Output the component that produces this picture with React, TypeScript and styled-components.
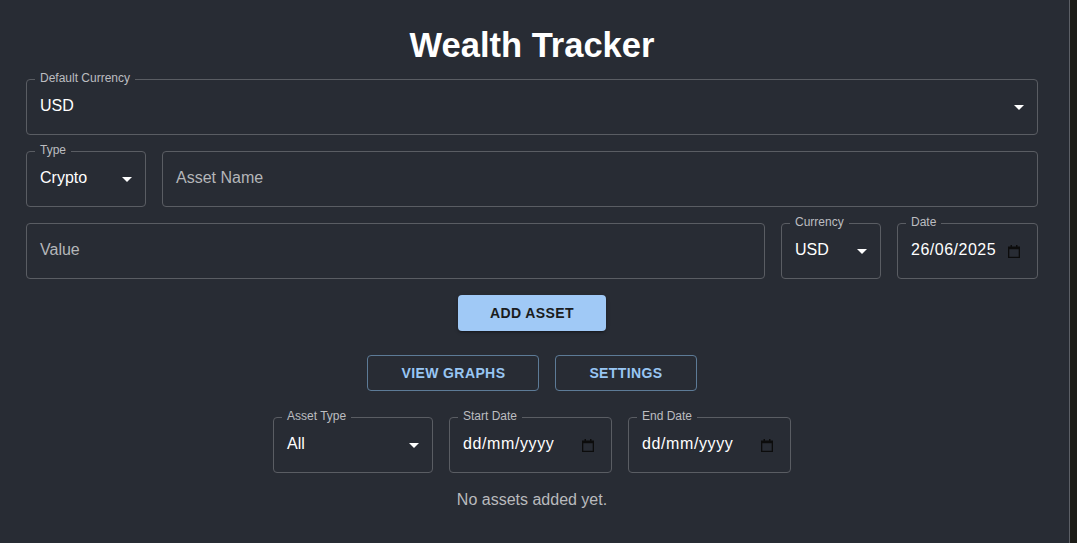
import React from "react";
import styled, { createGlobalStyle } from "styled-components";

const GlobalStyle = createGlobalStyle`
  html, body, #root {
    margin: 0;
    padding: 0;
    height: 100%;
  }
  body {
    background: #282c34;
    font-family: "Liberation Sans", Arial, sans-serif;
    color: #ffffff;
  }
`;

const Page = styled.div`
  display: flex;
  min-height: 100vh;
  background: #282c34;
`;

const Main = styled.main`
  flex: 1;
  min-width: 0;
  padding: 25px 31px 0 26px;
  display: flex;
  flex-direction: column;
`;

const ScrollStrip = styled.div`
  flex: none;
  width: 7px;
  border-left: 1px solid #5c5f66;
  background: #1c1c18;
`;

const Title = styled.h1`
  margin: 0 0 14px;
  text-align: center;
  font-size: 34.5px;
  line-height: 40px;
  font-weight: 700;
  color: #ffffff;
`;

const Form = styled.div`
  display: flex;
  flex-direction: column;
  gap: 16px;
`;

const Row = styled.div`
  display: flex;
  gap: 16px;
`;

const Field = styled.div<{ $width?: number; $padRight?: number }>`
  position: relative;
  box-sizing: border-box;
  height: 56px;
  display: flex;
  align-items: center;
  padding: 0 ${(p) => p.$padRight ?? 14}px 0 13px;
  border: 1px solid #5a5d63;
  border-radius: 4px;
  ${(p) => (p.$width ? `width: ${p.$width}px; flex: none;` : "flex: 1; min-width: 0;")}
`;

const Label = styled.span`
  position: absolute;
  top: -8px;
  left: 8px;
  padding: 0 5px;
  background: #282c34;
  font-size: 12px;
  line-height: 12px;
  color: #bcbdc0;
  white-space: nowrap;
`;

const Value = styled.span<{ $muted?: boolean; $spacing?: number }>`
  flex: 1;
  padding-bottom: 3px;
  font-size: 16px;
  color: ${(p) => (p.$muted ? "#b4b6b9" : "#ffffff")};
  letter-spacing: ${(p) => p.$spacing ?? 0}px;
  white-space: nowrap;
`;

const ArrowIcon = styled.svg`
  flex: none;
  width: 24px;
  height: 24px;
  margin-right: -8px;
  fill: #ffffff;
`;

const CalendarIcon = styled.svg`
  flex: none;
  width: 12px;
  height: 13px;
  fill: #0c0c0c;
`;

const ButtonRow = styled.div<{ $top: number }>`
  display: flex;
  justify-content: center;
  gap: 16px;
  margin-top: ${(p) => p.$top}px;
`;

const Button = styled.button<{ $variant: "contained" | "outlined" }>`
  box-sizing: border-box;
  height: 36px;
  padding: 0 ${(p) => (p.$variant === "contained" ? 32 : 33)}px;
  border-radius: 4px;
  font-family: "Liberation Sans", Arial, sans-serif;
  font-size: 14px;
  font-weight: 700;
  letter-spacing: 0.4px;
  text-transform: uppercase;
  cursor: pointer;
  ${(p) =>
    p.$variant === "contained"
      ? `
    background: #a0c9f6;
    color: #1a1c20;
    border: none;
    box-shadow: 0 3px 1px -2px rgba(0,0,0,0.2), 0 2px 2px 0 rgba(0,0,0,0.14), 0 1px 5px 0 rgba(0,0,0,0.12);
  `
      : `
    background: transparent;
    color: #98c6f3;
    border: 1px solid #5d7b97;
  `}
`;

const FilterRow = styled.div`
  display: flex;
  justify-content: center;
  gap: 16px;
  margin-top: 26px;
`;

const EmptyText = styled.p`
  margin: 18px 0 0;
  text-align: center;
  font-size: 16px;
  line-height: normal;
  color: #b9babd;
`;

const Arrow = () => (
  <ArrowIcon viewBox="0 0 24 24" aria-hidden="true">
    <path d="M7 10l5 5 5-5z" />
  </ArrowIcon>
);

const Calendar = () => (
  <CalendarIcon viewBox="0 0 12 13" aria-hidden="true">
    <rect x="2.5" y="0" width="1.5" height="2.5" />
    <rect x="8" y="0" width="1.5" height="2.5" />
    <path fillRule="evenodd" d="M0 1.5h12V13H0z M1.3 4.3v7.4h9.4V4.3z" />
  </CalendarIcon>
);

type SelectProps = { label?: string; value: string; width?: number };
const SelectField = ({ label, value, width }: SelectProps) => (
  <Field $width={width}>
    {label && <Label>{label}</Label>}
    <Value>{value}</Value>
    <Arrow />
  </Field>
);

type DateProps = { label: string; value: string; width: number };
const DateField = ({ label, value, width }: DateProps) => (
  <Field $width={width} $padRight={17}>
    <Label>{label}</Label>
    <Value $spacing={value.startsWith("dd") ? 0.6 : 0.5}>{value}</Value>
    <Calendar />
  </Field>
);

const TextField = ({ placeholder }: { placeholder: string }) => (
  <Field>
    <Value $muted>{placeholder}</Value>
  </Field>
);

export default function App() {
  return (
    <>
      <GlobalStyle />
      <Page>
        <Main>
          <Title>Wealth Tracker</Title>
          <Form>
            <Row>
              <SelectField label="Default Currency" value="USD" />
            </Row>
            <Row>
              <SelectField label="Type" value="Crypto" width={120} />
              <TextField placeholder="Asset Name" />
            </Row>
            <Row>
              <TextField placeholder="Value" />
              <SelectField label="Currency" value="USD" width={100} />
              <DateField label="Date" value="26/06/2025" width={141} />
            </Row>
          </Form>
          <ButtonRow $top={16}>
            <Button $variant="contained">Add Asset</Button>
          </ButtonRow>
          <ButtonRow $top={24}>
            <Button $variant="outlined">View Graphs</Button>
            <Button $variant="outlined">Settings</Button>
          </ButtonRow>
          <FilterRow>
            <SelectField label="Asset Type" value="All" width={160} />
            <DateField label="Start Date" value="dd/mm/yyyy" width={163} />
            <DateField label="End Date" value="dd/mm/yyyy" width={163} />
          </FilterRow>
          <EmptyText>No assets added yet.</EmptyText>
        </Main>
        <ScrollStrip />
      </Page>
    </>
  );
}
